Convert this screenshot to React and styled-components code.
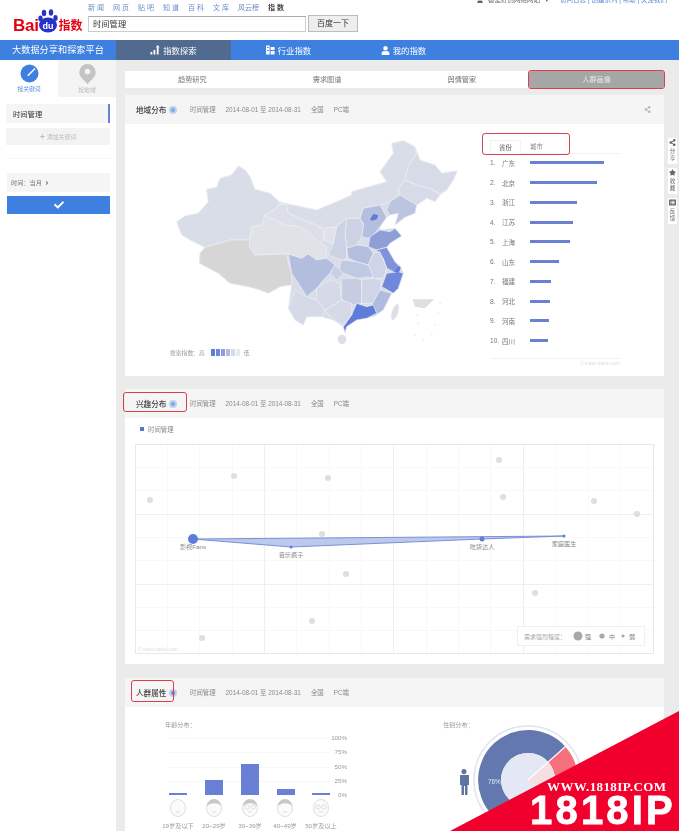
import React from "react";
import styled, { createGlobalStyle } from "styled-components";
import { FaCheck, FaUser, FaStar, FaShareAlt, FaPlus, FaAngleRight, FaListAlt } from "react-icons/fa";

const GlobalStyle = createGlobalStyle`
  html, body {
    margin: 0;
    padding: 0;
    background: #fff;
  }
  * {
    box-sizing: border-box;
  }
`;

const Page = styled.div`
  position: relative;
  width: 679px;
  height: 831px;
  overflow: hidden;
  background: #fff;
  color: #666;
  font-family: "Liberation Sans", "Noto Sans CJK SC", sans-serif;
  font-size: 7px;
`;

const Blurred = styled.div`
  filter: blur(0.45px);
`;

/* header */
const Header = styled.header`
  display: flex;
  height: 40px;
  padding-left: 13px;
`;

const Logo = styled.div`
  display: flex;
  align-items: flex-end;
  width: 75px;
  height: 34px;
  color: #e60012;
  font-weight: 700;
`;

const LogoBai = styled.span`
  font-size: 17px;
  line-height: 17px;
  letter-spacing: -0.3px;
`;

const LogoZh = styled.span`
  font-size: 12px;
  line-height: 15px;
`;

const HeaderMain = styled.div`
  flex: 1;
  display: flex;
  flex-direction: column;
`;

const TopRow = styled.div`
  display: flex;
  justify-content: space-between;
  height: 16px;
`;

const TopLinks = styled.div`
  display: flex;
  gap: 9px;
  padding-top: 4px;
  height: 12px;
`;

const TopLink = styled.span`
  font-size: 7px;
  line-height: 8px;
  color: ${props => (props.$active ? "#444" : "#6a8ccc")};
  font-weight: ${props => (props.$active ? 700 : 400)};
  letter-spacing: ${props => (props.$tight ? "0" : "2px")};
  margin-right: ${props => (props.$tight ? "0" : "-2px")};
`;

const UserBar = styled.div`
  display: flex;
  align-items: center;
  height: 8px;
  margin-top: -4px;
  margin-right: 12px;
  gap: 5px;
  font-size: 6.5px;
  line-height: 8px;
  color: #666;
`;

const UserLinks = styled.span`
  color: #5a86d0;
  margin-left: 6px;
`;

const SearchRow = styled.div`
  display: flex;
  gap: 2px;
`;

const SearchInput = styled.div`
  width: 218px;
  height: 16px;
  border: 1px solid #ccc;
  border-top-color: #aaa;
  padding-left: 4px;
  font-size: 8.3px;
  line-height: 14px;
  color: #333;
`;

const SearchButton = styled.div`
  width: 50px;
  height: 17px;
  margin-top: -1px;
  border: 1px solid #bbb;
  background: #eee;
  text-align: center;
  font-size: 8px;
  line-height: 15px;
  color: #333;
`;

/* nav */
const NavBar = styled.nav`
  display: flex;
  height: 20px;
  background: #3d80e0;
  color: #fff;
`;

const NavTitle = styled.div`
  width: 116px;
  text-align: center;
  font-size: 9.2px;
  line-height: 20px;
`;

const NavItem = styled.div`
  width: 115px;
  display: flex;
  align-items: center;
  justify-content: center;
  gap: 3px;
  font-size: 8.4px;
  background: ${props => (props.$active ? "#506a90" : "transparent")};
`;

/* page body */
const Body = styled.div`
  display: flex;
  height: 771px;
  background: #ebebeb;
`;

const Sidebar = styled.aside`
  width: 116px;
  flex-shrink: 0;
  background: #fff;
`;

const ModeTabs = styled.div`
  display: flex;
  height: 37px;
`;

const ModeTab = styled.div`
  width: 58px;
  display: flex;
  flex-direction: column;
  align-items: center;
  padding-top: 4px;
  gap: 2px;
  font-size: 5.8px;
  line-height: 8px;
  background: ${props => (props.$active ? "#fff" : "#f4f4f4")};
  color: ${props => (props.$active ? "#5b8ee0" : "#bbb")};
`;

const SideRow = styled.div`
  display: flex;
  align-items: center;
  margin: ${props => props.$margin || "0 6px"};
  height: ${props => props.$height || 19}px;
  background: ${props => props.$bg || "#f5f5f5"};
  padding-left: 7px;
`;

const KeywordRow = styled(SideRow)`
  border-right: 2px solid #6a80d4;
  color: #333;
  font-size: 7.3px;
`;

const AddRow = styled(SideRow)`
  justify-content: center;
  gap: 2px;
  color: #bbb;
  font-size: 5.8px;
  padding-left: 0;
`;

const SideDivider = styled.div`
  height: 1px;
  margin: 13px 6px 14px;
  background: #f6f6f6;
`;

const TimeRow = styled(SideRow)`
  gap: 2px;
  padding-left: 4px;
  font-size: 6.2px;
  color: #777;
`;

const ConfirmButton = styled.div`
  display: flex;
  align-items: center;
  justify-content: center;
  height: 18px;
  margin: 4px 6px 0 7px;
  background: #3d80e0;
  color: #fff;
  font-size: 10px;
`;

const Content = styled.main`
  width: 548px;
  padding: 11px 0 0 9px;
  flex-shrink: 0;
`;

const Tabs = styled.div`
  display: grid;
  grid-template-columns: repeat(4, 1fr);
  height: 17px;
  margin-bottom: 7px;
  background: #fff;
`;

const Tab = styled.div`
  position: relative;
  text-align: center;
  font-size: 7.2px;
  line-height: 17px;
  color: ${props => (props.$active ? "#e8e8e8" : "#777")};
  background: ${props => (props.$active ? "#a6a6a6" : "transparent")};
  ${props =>
    props.$active &&
    `
    outline: 1.5px solid #d8404a;
    border-radius: 2px;
  `}
`;

const Card = styled.section`
  background: #fff;
  margin-bottom: ${props => props.$gap || 0}px;
`;

const CardHeader = styled.div`
  display: flex;
  align-items: center;
  height: 29px;
  padding: 0 13px 0 11px;
  background: #f5f5f5;
  color: #8a8a8a;
  font-size: 6.4px;
`;

const TitleWrap = styled.div`
  position: relative;
  display: flex;
  align-items: center;
  gap: 3px;
  width: 54px;
  flex-shrink: 0;
  color: #444;
  font-size: 7.6px;
  font-weight: 500;
  ${props =>
    props.$mark &&
    `
    &::after {
      content: "";
      position: absolute;
      inset: ${props.$mark};
      border: 1.5px solid #d8404a;
      border-radius: 3px;
    }
  `}
`;

const InfoDot = styled.span`
  display: inline-block;
  width: 8px;
  height: 8px;
  border-radius: 50%;
  background: ${props => props.$color || "#7fa8e0"};
  border: 2px solid #bcd2ef;
`;

const Meta = styled.div`
  display: flex;
  gap: 10px;
  flex: 1;
`;

const ShareMark = styled.div`
  color: #bbb;
  font-size: 7px;
  display: flex;
`;

/* map card */
const MapBody = styled.div`
  display: flex;
  height: 252px;
`;

const MapColumn = styled.div`
  width: 345px;
  padding: 6px 0 0 35px;
  flex-shrink: 0;
`;

const MapLegend = styled.div`
  display: flex;
  align-items: center;
  gap: 3px;
  margin: 0 0 0 10px;
  height: 14px;
  font-size: 5.8px;
  color: #999;
`;

const LegendSwatch = styled.span`
  width: 4px;
  height: 7px;
  margin-right: -2px;
  background: ${props => props.$color};
  &:first-of-type {
    margin-left: 3px;
  }
`;

const LegendLow = styled.span`
  margin-left: 3px;
`;

const RankColumn = styled.div`
  width: 130px;
  margin-left: 20px;
  padding-top: 16px;
`;

const RankTabs = styled.div`
  position: relative;
  display: flex;
  align-items: center;
  height: 14px;
  margin-bottom: -1px;
  border-bottom: 1px solid #f2f2f2;
  font-size: 6.4px;
  color: #888;
  &::after {
    content: "";
    position: absolute;
    inset: -7px 50px -2px -8px;
    border: 1.5px solid #d8404a;
    border-radius: 3px;
  }
`;

const RankTab = styled.div`
  width: ${props => props.$width}px;
  height: 14px;
  line-height: 13px;
  text-align: center;
  color: ${props => (props.$active ? "#555" : "#888")};
  ${props => props.$active && "border: 1px solid #f2f2f2; border-bottom-color: #fff;"}
`;

const RankRow = styled.div`
  display: flex;
  align-items: center;
  height: 19.75px;
  font-size: 6.6px;
  color: #777;
`;

const RankNum = styled.span`
  width: 12px;
`;

const RankName = styled.span`
  width: 28px;
`;

const RankBar = styled.span`
  display: block;
  height: 3px;
  background: #6a80d0;
`;

const RankFoot = styled.div`
  margin-top: 7px;
  padding-top: 1px;
  border-top: 1px solid #f2f2f2;
  text-align: right;
  font-size: 4.8px;
  line-height: 7px;
  color: #ddd;
`;

/* interest card */
const InterestBody = styled.div`
  height: 246px;
  padding-left: 10px;
`;

const SeriesLegend = styled.div`
  display: flex;
  align-items: center;
  gap: 4px;
  height: 26px;
  padding: 0 0 4px 5px;
  font-size: 6.4px;
  color: #888;
`;

const SeriesSwatch = styled.span`
  width: 4px;
  height: 4px;
  background: #5b74c4;
`;

const Chart = styled.svg`
  display: block;
  font-family: "Liberation Sans", "Noto Sans CJK SC", sans-serif;
`;

const GenderSvg = styled(Chart)`
  margin-top: -12px;
`;

/* crowd card */
const CrowdBody = styled.div`
  display: flex;
  height: 124px;
  padding-top: 13px;
`;

const CrowdColumn = styled.div`
  width: ${props => props.$width}px;
  flex-shrink: 0;
  padding-left: ${props => props.$left}px;
`;

const CrowdLabel = styled.div`
  height: 10px;
  margin: 0 0 2px ${props => props.$indent || 0}px;
  font-size: 6.2px;
  line-height: 10px;
  color: #999;
`;

/* right strip */
const SideTools = styled.div`
  display: flex;
  flex-direction: column;
  gap: 4px;
  width: 9px;
  margin: 78px 0 0 4px;
`;

const ToolItem = styled.div`
  display: flex;
  flex-direction: column;
  align-items: center;
  height: 26px;
  padding-top: 1px;
  gap: 2px;
  background: #fff;
  color: #666;
  font-size: 5.6px;
  line-height: 6.5px;
  text-align: center;
  svg {
    flex-shrink: 0;
  }
`;

/* watermark */
const Ribbon = styled.div`
  position: absolute;
  left: 450px;
  top: 711px;
  width: 229px;
  height: 120px;
  background: #f2002d;
  clip-path: polygon(100% 0, 100% 100%, 0 100%);
`;

const RibbonUrl = styled.div`
  position: absolute;
  left: 547px;
  top: 780px;
  color: #fff;
  font-family: "Liberation Serif", serif;
  font-size: 13px;
  line-height: 14px;
  font-weight: 700;
  white-space: nowrap;
  letter-spacing: 0.4px;
`;

const RibbonName = styled.div`
  position: absolute;
  left: 530px;
  top: 795px;
  color: #fff;
  font-family: "Liberation Sans", sans-serif;
  font-size: 40px;
  line-height: 31px;
  font-weight: 700;
  white-space: nowrap;
  letter-spacing: 3.2px;
  -webkit-text-stroke: 0.8px #fff;
`;

const outline =
  "50,275 75,258 115,250 145,215 140,178 170,172 180,145 215,135 235,108 255,120 270,140 285,178 330,190 358,215 400,225 470,240 530,215 575,195 575,185 610,175 680,155 660,125 700,70 695,40 730,32 765,50 780,90 825,105 845,130 892,122 880,150 860,180 840,195 825,215 800,205 770,225 765,250 735,262 705,285 715,250 690,255 680,262 660,290 660,300 705,295 725,318 690,340 680,352 705,395 722,408 730,430 715,475 695,490 670,540 640,560 620,565 590,570 560,590 555,608 550,590 520,570 485,560 440,560 430,585 405,570 385,535 395,465 360,470 325,490 300,480 265,470 210,460 175,430 118,400 120,370 135,352 100,335 65,315";

const provinces = [
  ["#d9dde8", "50,275 75,258 115,250 145,215 140,178 170,172 180,145 215,135 235,108 255,120 270,140 285,178 330,190 358,215 350,235 315,255 305,285 275,290 270,330 210,330 135,352 100,335 65,315"],
  ["#d6d6d6", "135,352 210,330 270,330 268,350 285,375 380,372 385,400 395,430 395,465 360,470 325,490 300,480 265,470 210,460 175,430 118,400 120,370"],
  ["#e0e2e8", "275,290 305,285 315,255 375,285 420,290 450,310 480,340 500,350 500,385 470,390 445,372 425,385 385,370 285,375 268,350 270,330"],
  ["#dcdfe9", "315,255 350,235 360,222 378,220 385,250 420,265 470,285 490,300 490,330 480,340 450,310 420,290 375,285"],
  ["#d9dde8", "360,222 400,225 470,240 530,215 575,195 575,185 610,175 680,155 660,125 700,70 695,40 730,32 765,50 770,70 745,110 735,150 715,175 720,195 690,215 660,225 610,235 600,265 560,265 530,290 495,295 470,285 420,265 385,250 378,220"],
  ["#d7dbe8", "745,110 770,70 765,50 780,90 825,105 845,130 892,122 880,150 860,180 840,190 815,178 770,165 735,150"],
  ["#d7dbe8", "735,150 770,165 815,178 840,195 825,215 800,205 770,225 745,210 720,195 715,175"],
  ["#bcc5df", "690,215 720,195 745,210 770,225 765,250 735,262 705,285 715,250 690,255 680,240"],
  ["#b4bfe0", "610,235 660,225 680,262 660,290 640,315 625,325 605,320 610,280 600,265"],
  ["#8e9fd8", "630,320 660,300 690,305 705,295 725,318 690,340 680,352 650,360 625,350"],
  ["#cdd3e5", "560,265 600,265 610,285 605,320 590,345 560,355 555,310"],
  ["#ccd2e4", "530,290 560,265 555,310 560,355 560,385 545,390 505,375 520,340"],
  ["#dfe2ea", "495,295 530,290 520,340 490,330"],
  ["#b4bedd", "560,355 590,345 625,350 640,370 625,405 590,395 565,385"],
  ["#7f93da", "650,360 680,352 705,395 720,412 700,425 680,415 670,385"],
  ["#cfd5e6", "640,370 660,365 680,415 670,445 640,445 625,405"],
  ["#7088da", "680,430 715,425 730,430 715,475 700,490 665,470"],
  ["#c0c9e2", "545,390 590,395 625,405 640,440 590,445 550,430 530,445"],
  ["#b3bddd", "385,372 425,385 445,372 470,390 500,385 525,405 510,430 490,450 470,475 440,500 425,475 395,430"],
  ["#c9cfe5", "525,405 550,430 530,450 510,430"],
  ["#c6cde3", "545,445 590,445 605,450 605,520 580,525 545,510"],
  ["#d0d6e7", "605,450 640,445 665,450 660,480 640,520 605,520"],
  ["#afbbe0", "660,480 695,490 670,540 640,560 635,525"],
  ["#5f7cd8", "550,590 575,555 590,520 620,530 640,525 650,550 620,565 590,570 560,590 555,608"],
  ["#d5d9e8", "495,540 545,510 575,520 575,555 550,585 520,570"],
  ["#d5d9e8", "470,475 510,450 540,460 545,510 495,540 470,510"],
  ["#d5d9e8", "440,500 470,510 495,540 485,560 440,560 430,585 405,570 385,535 405,480"]
];

const seaDots = [
  [772, 555], [775, 580], [765, 615], [790, 630], [815, 612], [825, 585], [835, 550], [840, 520]
];

const ChinaMap = () => (
  <svg width="310" height="215" viewBox="0 0 930 645" style={{ display: "block" }}>
    <polygon points={outline} fill="#d9dde8" stroke="#d9dde8" strokeWidth="1" strokeLinejoin="round" />
    {provinces.map(([fill, points], i) => (
      <polygon key={i} points={points} fill={fill} stroke="#eef0f5" strokeWidth="2" strokeLinejoin="round" />
    ))}
    <polygon points="700,425 718,408 722,415 716,428" fill="#5f7cd8" />
    <polygon points="630,268 640,252 655,256 650,268 636,272" fill="#5f7cd8" />
    <ellipse cx="546" cy="628" rx="13" ry="14" fill="#dcdfe6" />
    <ellipse cx="705" cy="546" rx="9" ry="25" transform="rotate(18 705 546)" fill="#dcdfe6" />
    <polygon points="758,508 822,508 795,535 765,530" fill="#dedfe3" />
    {seaDots.map(([x, y]) => (
      <circle key={x + "-" + y} cx={x} cy={y} r="2.500" fill="#e4e4e6" />
    ))}
  </svg>
);

const ranks = [
  ["广东", 74], ["北京", 67], ["浙江", 47], ["江苏", 43], ["上海", 40],
  ["山东", 29], ["福建", 21], ["河北", 20], ["河南", 19], ["四川", 18]
];

const minorX = [167, 199, 232, 296, 329, 361, 426, 458, 490, 555, 588, 620];
const majorX = [264.5, 393.5, 523.5];
const minorY = [467, 490, 537, 560, 607, 630];
const majorY = [514, 584];
const greyDots = [
  [150, 500], [234, 476], [328, 478], [322, 534], [346, 574], [312, 621],
  [202, 638], [499, 460], [503, 497], [594, 501], [637, 514], [535, 593]
];
const points = [
  { x: 193, y: 539, r: 5, label: "影视Fans", dy: 10 },
  { x: 291, y: 547, r: 1.5, label: "音乐疯子", dy: 10 },
  { x: 482, y: 539, r: 2.5, label: "吃货达人", dy: 10 },
  { x: 564, y: 536, r: 1.5, label: "家庭医生", dy: 10 }
];

const InterestChart = () => (
  <Chart width="519" height="210" viewBox="135 444 519 210">
    <rect x="135.5" y="444.5" width="518" height="209" fill="#fff" stroke="#e8e8e8" />
    {minorX.map(x => (
      <line key={x} x1={x + 0.5} x2={x + 0.5} y1="445" y2="653" stroke="#f8f8f8" />
    ))}
    {minorY.map(y => (
      <line key={y} x1="136" x2="653" y1={y + 0.5} y2={y + 0.5} stroke="#f8f8f8" />
    ))}
    {majorX.map(x => (
      <line key={x} x1={x} x2={x} y1="445" y2="653" stroke="#efefef" />
    ))}
    {majorY.map(y => (
      <line key={y} x1="136" x2="653" y1={y + 0.5} y2={y + 0.5} stroke="#efefef" />
    ))}
    {greyDots.map(([x, y]) => (
      <circle key={x} cx={x} cy={y} r="3" fill="#dedede" />
    ))}
    <polygon points="193,539 291,547 482,539 564,536" fill="#bcc8ec" stroke="#7c90d8" strokeWidth="1" />
    {points.map(p => (
      <g key={p.label}>
        <circle cx={p.x} cy={p.y} r={p.r} fill="#5f7cd8" />
        <text x={p.x} y={p.y + p.dy} textAnchor="middle" fontSize="6.2" fill="#888">
          {p.label}
        </text>
      </g>
    ))}
    <text x="138" y="651" fontSize="4.8" fill="#ddd">© index.baidu.com</text>
    <rect x="517.5" y="626.5" width="127" height="19" fill="#fff" stroke="#f0f0f0" />
    <text x="524" y="639" fontSize="6" fill="#aaa">需求强烈程度：</text>
    <circle cx="578" cy="636" r="4.5" fill="#a8a8a8" />
    <text x="585" y="639" fontSize="6" fill="#777">强</text>
    <circle cx="602" cy="636" r="2.6" fill="#a8a8a8" />
    <text x="609" y="639" fontSize="6" fill="#888">中</text>
    <circle cx="623" cy="636" r="1.6" fill="#a8a8a8" />
    <text x="629" y="639" fontSize="6" fill="#777">弱</text>
  </Chart>
);

const ageBars = [
  { x: 169, top: 793 },
  { x: 205, top: 780 },
  { x: 241, top: 764 },
  { x: 277, top: 789 },
  { x: 312, top: 793 }
];
const ageTicks = [
  ["100%", 738], ["75%", 752], ["50%", 767], ["25%", 781], ["0%", 795]
];
const ageLabels = ["19岁及以下", "20~29岁", "30~39岁", "40~49岁", "50岁及以上"];
const faceX = [178, 214, 250, 285, 321];

const Face = ({ cx, hair, glasses }) => (
  <g fill="none" stroke="#d6d6d6" strokeWidth="0.8">
    <ellipse cx={cx} cy="808" rx="7.5" ry="8.5" fill="#fbfbfb" />
    {hair && <path d={`M${cx - 7} 806c0-9 14-9 14 0c-3-3-9-4-14 0z`} fill="#c8c8c8" stroke="none" />}
    {glasses && (
      <>
        <circle cx={cx - 3} cy="807" r="2.2" />
        <circle cx={cx + 3} cy="807" r="2.2" />
      </>
    )}
    <path d={`M${cx - 2} 812h4`} />
  </g>
);

const AgeChart = () => (
  <Chart width="200" height="99" viewBox="155 732 200 99">
    {[738, 752, 767, 781].map(y => (
      <line key={y} x1="169" x2="330" y1={y + 0.5} y2={y + 0.5} stroke="#f7f7f7" />
    ))}
    {ageBars.map(b => (
      <rect key={b.x} x={b.x} y={b.top} width="18" height={795 - b.top} fill="#6a80d4" />
    ))}
    {ageTicks.map(([label, y]) => (
      <text key={label} x="347" y={y + 2} textAnchor="end" fontSize="6.2" fill="#999">
        {label}
      </text>
    ))}
    <Face cx={178} />
    <Face cx={214} hair />
    <Face cx={250} hair glasses />
    <Face cx={285} hair />
    <Face cx={321} glasses />
    {ageLabels.map((label, i) => (
      <text key={label} x={faceX[i]} y="828" textAnchor="middle" fontSize="6.2" fill="#999">
        {label}
      </text>
    ))}
  </Chart>
);

const GenderChart = () => (
  <GenderSvg width="170" height="111" viewBox="443 720 170 111">
    <path
      fill="#5f749f"
      d="M464 769a2.6 2.6 0 1 1-.01 0zM460 775h9v10h-1.5v10h-2.5v-9h-1v9h-2.5v-10H460z"
    />
    <circle cx="528" cy="780" r="54" fill="none" stroke="#dfe4f0" strokeWidth="1.5" />
    <path
      fill="#6478b0"
      d="M565.4 746.7A50 50 0 1 0 563.6 815.2L547.2 799A27 27 0 1 1 548.2 762z"
    />
    <path fill="#f56f7c" d="M565.4 746.7A50 50 0 0 1 563.6 815.2L547.2 799A27 27 0 0 0 548.2 762z" />
    <circle cx="528" cy="780" r="27" fill="#e4e8f5" />
    <path fill="#f5dfdf" d="M528 780L548.2 762A27 27 0 0 1 547.2 799z" />
    <path stroke="#fff" strokeWidth="1.2" d="M528 780L566 746" />
    <text x="488" y="784" fontSize="6.4" fill="#e8ecf8">76%</text>
  </GenderSvg>
);

const NavBarsIcon = () => (
  <svg width="10" height="10" viewBox="0 0 10 10" fill="#fff">
    <rect x="0.5" y="7" width="1.8" height="2.5" />
    <rect x="3.5" y="5" width="1.8" height="4.5" />
    <rect x="6.8" y="2.5" width="1.8" height="7" />
    <path d="M7.7 0l2 2.6h-4z" />
  </svg>
);

const NavGridIcon = () => (
  <svg width="9" height="10" viewBox="0 0 9 10" fill="#fff">
    <rect x="0" y="0.5" width="3.6" height="9" />
    <rect x="4.6" y="2" width="4" height="3" />
    <rect x="4.6" y="6" width="4" height="3.5" />
    <path d="M1 2h1.6v1H1zM1 5h1.6v1H1z" fill="#3d80e0" />
  </svg>
);

const KeywordIcon = () => (
  <svg width="19" height="19" viewBox="0 0 19 19">
    <circle cx="9.5" cy="9.5" r="9" fill="#3d80e0" />
    <path d="M14.5 4L8 10.5l-1.5 2.5 2.6-1.4L15.5 5z" fill="#fff" />
    <circle cx="7" cy="12.5" r="1" fill="#3d80e0" />
  </svg>
);

const RegionIcon = () => (
  <svg width="17" height="20" viewBox="0 0 17 20">
    <path d="M8.5 0a8.2 8.2 0 0 1 8.2 8.2c0 5-5 8-8.2 11.8C5.3 16.2.3 13.2.3 8.2A8.2 8.2 0 0 1 8.5 0z" fill="#c4c4c4" />
    <circle cx="8.5" cy="7.5" r="2.8" fill="#f4f4f4" />
  </svg>
);

const Paw = () => (
  <svg width="21" height="24" viewBox="0 0 21 24" style={{ marginLeft: -1, marginBottom: 1 }}>
    <g fill="#2932c8">
      <ellipse cx="6" cy="4" rx="2.2" ry="3.2" />
      <ellipse cx="13" cy="3.5" rx="2.2" ry="3.2" />
      <ellipse cx="2.5" cy="9.5" rx="2.2" ry="3" />
      <ellipse cx="17.5" cy="9" rx="2.2" ry="3" />
      <ellipse cx="10" cy="16" rx="9" ry="7.5" />
    </g>
    <text x="10" y="20" textAnchor="middle" fontSize="9" fontWeight="700" fill="#fff">du</text>
  </svg>
);

const CardMeta = () => (
  <Meta>
    <span>时间管理</span>
    <span>2014-08-01 至 2014-08-31</span>
    <span>全国</span>
    <span>PC端</span>
  </Meta>
);

const App = () => (
  <Page>
    <GlobalStyle />
    <Blurred>
      <Header>
        <Logo>
          <LogoBai>Bai</LogoBai>
          <Paw />
          <LogoZh>指数</LogoZh>
        </Logo>
        <HeaderMain>
          <TopRow>
            <TopLinks>
              <TopLink>新闻</TopLink>
              <TopLink>网页</TopLink>
              <TopLink>贴吧</TopLink>
              <TopLink>知道</TopLink>
              <TopLink>百科</TopLink>
              <TopLink>文库</TopLink>
              <TopLink $tight>风云榜</TopLink>
              <TopLink $active>指数</TopLink>
            </TopLinks>
            <UserBar>
              <FaUser size={6} />
              <span>都是好的网络网站</span>
              <span>▾</span>
              <UserLinks>访问日志 | 创建系列 | 帮助 | 关注我们</UserLinks>
            </UserBar>
          </TopRow>
          <SearchRow>
            <SearchInput>时间管理</SearchInput>
            <SearchButton>百度一下</SearchButton>
          </SearchRow>
        </HeaderMain>
      </Header>

      <NavBar>
        <NavTitle>大数据分享和探索平台</NavTitle>
        <NavItem $active>
          <NavBarsIcon />
          指数探索
        </NavItem>
        <NavItem>
          <NavGridIcon />
          行业指数
        </NavItem>
        <NavItem>
          <FaUser size={9} />
          我的指数
        </NavItem>
      </NavBar>

      <Body>
        <Sidebar>
          <ModeTabs>
            <ModeTab $active>
              <KeywordIcon />
              按关键词
            </ModeTab>
            <ModeTab>
              <RegionIcon />
              按地域
            </ModeTab>
          </ModeTabs>
          <KeywordRow $margin="7px 6px 0">时间管理</KeywordRow>
          <AddRow $margin="5px 6px 0" $height={17} $bg="#f3f3f3">
            <FaPlus size={5} />
            添加关键词
          </AddRow>
          <SideDivider />
          <TimeRow $margin="0 6px 0 7px">
            时间：当月
            <FaAngleRight size={6} />
          </TimeRow>
          <ConfirmButton>
            <FaCheck />
          </ConfirmButton>
        </Sidebar>

        <Content>
          <Tabs>
            <Tab>趋势研究</Tab>
            <Tab>需求图谱</Tab>
            <Tab>舆情管家</Tab>
            <Tab $active>人群画像</Tab>
          </Tabs>

          <Card $gap={13}>
            <CardHeader>
              <TitleWrap>
                地域分布
                <InfoDot />
              </TitleWrap>
              <CardMeta />
              <ShareMark>
                <FaShareAlt />
              </ShareMark>
            </CardHeader>
            <MapBody>
              <MapColumn>
                <ChinaMap />
                <MapLegend>
                  搜索指数：高
                  {["#5f7cd8", "#7088da", "#8e9fd8", "#b3bddd", "#d5d9e8", "#e8eaf0"].map(c => (
                    <LegendSwatch key={c} $color={c} />
                  ))}
                  <LegendLow>低</LegendLow>
                </MapLegend>
              </MapColumn>
              <RankColumn>
                <RankTabs>
                  <RankTab $active $width={31}>省份</RankTab>
                  <RankTab $width={31}>城市</RankTab>
                </RankTabs>
                {ranks.map(([name, width], i) => (
                  <RankRow key={name}>
                    <RankNum>{i + 1}.</RankNum>
                    <RankName>{name}</RankName>
                    <RankBar style={{ width }} />
                  </RankRow>
                ))}
                <RankFoot>© index.baidu.com</RankFoot>
              </RankColumn>
            </MapBody>
          </Card>

          <Card $gap={14}>
            <CardHeader>
              <TitleWrap $mark="-6px 3px -3px -13px">
                兴趣分布
                <InfoDot />
              </TitleWrap>
              <CardMeta />
            </CardHeader>
            <InterestBody>
              <SeriesLegend>
                <SeriesSwatch />
                时间管理
              </SeriesLegend>
              <InterestChart />
            </InterestBody>
          </Card>

          <Card>
            <CardHeader>
              <TitleWrap $mark="-7px 16px -4px -5px">
                人群属性
                <InfoDot $color="#7f85c8" />
              </TitleWrap>
              <CardMeta />
            </CardHeader>
            <CrowdBody>
              <CrowdColumn $width={318} $left={30}>
                <CrowdLabel $indent={10}>年龄分布：</CrowdLabel>
                <AgeChart />
              </CrowdColumn>
              <CrowdColumn $width={200} $left={0}>
                <CrowdLabel>性别分布：</CrowdLabel>
                <GenderChart />
              </CrowdColumn>
            </CrowdBody>
          </Card>
        </Content>

        <SideTools>
          <ToolItem>
            <FaShareAlt size={7} />
            分享
          </ToolItem>
          <ToolItem>
            <FaStar size={7} />
            收藏
          </ToolItem>
          <ToolItem>
            <FaListAlt size={7} />
            反馈
          </ToolItem>
        </SideTools>
      </Body>
    </Blurred>

    <Ribbon />
    <RibbonUrl>WWW.1818IP.COM</RibbonUrl>
    <RibbonName>1818IP</RibbonName>
  </Page>
);

export default App;
